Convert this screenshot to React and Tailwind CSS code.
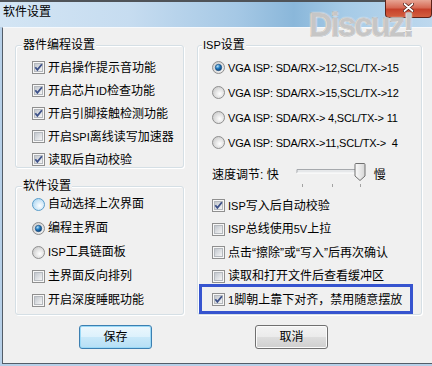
import React, { useId } from "react";

function uid() {
  return useId().replace(/[^a-zA-Z0-9]/g, "");
}

function CheckBox({ checked }) {
  const id = uid();
  return (
    <svg width="13" height="13" viewBox="0 0 13 13" className="shrink-0">
      <defs>
        <linearGradient id={`cb${id}`} x1="0" y1="0" x2="1" y2="1">
          <stop offset="0" stopColor="#bfc4cb" />
          <stop offset="1" stopColor="#f8f8f8" />
        </linearGradient>
      </defs>
      <rect x="0.5" y="0.5" width="12" height="12" fill="#f7f7f7" stroke="#8f8f8f" />
      <rect x="2.5" y="2.5" width="8" height="8" fill={`url(#cb${id})`} stroke="#b5b9be" />
      {checked && (
        <path d="M3.3 6.3 L5.4 8.9 L9.9 3.3" fill="none" stroke="#3d5189" strokeWidth="1.8" />
      )}
    </svg>
  );
}

function Radio({ checked, hover }) {
  const id = uid();
  return (
    <svg width="13" height="13" viewBox="0 0 13 13" className="shrink-0">
      <defs>
        <radialGradient id={`rb${id}`} cx="0.6" cy="0.6" r="0.6">
          <stop offset="0" stopColor="#ffffff" />
          <stop offset="1" stopColor={hover ? "#b3d9f2" : "#cfcfcf"} />
        </radialGradient>
        <radialGradient id={`rd${id}`} cx="0.35" cy="0.3" r="0.75">
          <stop offset="0" stopColor="#b5e4fb" />
          <stop offset="0.5" stopColor="#1f78be" />
          <stop offset="1" stopColor="#0b3d72" />
        </radialGradient>
      </defs>
      <circle cx="6.5" cy="6.5" r="6" fill={`url(#rb${id})`} stroke={hover ? "#5b9dc9" : "#8f8f8f"} />
      {checked && <circle cx="6.5" cy="6.5" r="3.2" fill={`url(#rd${id})`} stroke="#1b4c7c" strokeWidth="0.7" />}
    </svg>
  );
}

function L({ children }) {
  return <span className="text-[11px]">{children}</span>;
}

function Row({ h, control, children, mono }) {
  return (
    <div className={`flex items-center ${h}`}>
      {control}
      <span className={`ml-[3px] whitespace-pre leading-[14px] ${mono ? "text-[11px] tracking-[-0.2px]" : ""}`}>
        {children}
      </span>
    </div>
  );
}

function Group({ label, labelLeft, className, children }) {
  return (
    <div
      className={`relative rounded-[3px] border border-[#d5dfe5] shadow-[inset_1px_1px_0_#ffffff,1px_1px_0_#ffffff] ${className}`}
    >
      <span className={`absolute top-[-8px] ${labelLeft} bg-[#f0f0f0] px-[1px] leading-[14px]`}>{label}</span>
      {children}
    </div>
  );
}

function Slider() {
  return (
    <svg width="72" height="27" viewBox="0 0 72 27" className="shrink-0">
      <defs>
        <linearGradient id="thumbg" x1="0" y1="0" x2="1" y2="0">
          <stop offset="0" stopColor="#fbfbfb" />
          <stop offset="1" stopColor="#d6d6d6" />
        </linearGradient>
      </defs>
      <rect x="2" y="7.5" width="67" height="3.5" fill="#e6e8ea" />
      <line x1="2" y1="7.5" x2="69" y2="7.5" stroke="#a6a9ad" />
      <line x1="2" y1="7.5" x2="2" y2="11" stroke="#a6a9ad" />
      <line x1="2" y1="11" x2="69" y2="11" stroke="#ffffff" />
      <line x1="7.5" y1="22" x2="7.5" y2="25" stroke="#a2a2a2" />
      <line x1="37.5" y1="22" x2="37.5" y2="25" stroke="#a2a2a2" />
      <line x1="65.5" y1="22" x2="65.5" y2="25" stroke="#a2a2a2" />
      <path
        d="M60 2.5 Q60 1.5 61 1.5 L69 1.5 Q70 1.5 70 2.5 L70 14 L65 18.5 L60 14 Z"
        fill="url(#thumbg)"
        stroke="#707070"
      />
    </svg>
  );
}

export default function App() {
  return (
    <div className="relative w-[432px] h-[366px] overflow-hidden bg-[#f0f0f0] text-[12px] text-black font-['Liberation_Sans','Noto_Sans_CJK_SC',sans-serif]">
      {/* Title bar */}
      <div className="h-[27px] bg-[linear-gradient(90deg,#d3e5f4_0%,#c6dcf0_30%,#a5c8e5_55%,#8ab7da_68%,#a6cbe7_80%,#bdd8ee_100%)]">
        <div className="h-[2px] bg-[#4f5358]" />
        <div className="pl-[3px] pt-[3px] text-[12px] leading-[14px]">软件设置</div>
      </div>

      {/* Close button */}
      <div className="absolute left-[385px] top-0 w-[47px] h-[18px] rounded-b-[4px] border border-t-0 border-[#5d2219] bg-[linear-gradient(to_bottom,#e7a594_0%,#d66a55_45%,#c6412b_55%,#d35f3f_100%)] flex items-start justify-center pt-[3px]">
        <svg width="11" height="9" viewBox="0 0 11 9">
          <path d="M1.5 1 L9.5 8 M9.5 1 L1.5 8" stroke="#4a150d" strokeWidth="3.2" strokeLinecap="round" />
          <path d="M1.5 1 L9.5 8 M9.5 1 L1.5 8" stroke="#ffffff" strokeWidth="1.8" strokeLinecap="round" />
        </svg>
      </div>

      {/* Watermark */}
      <div className="absolute left-[309px] top-[12px] text-[33px] font-bold tracking-[-2px] text-[#c6c6c6] leading-[26px] font-['Liberation_Sans',sans-serif] [-webkit-text-stroke:1.2px_#8f8f8f] [paint-order:stroke_fill] [text-shadow:0_0_2px_#ffffff,0_0_2px_#ffffff]">
        Discuz!
      </div>

      {/* Frame + client */}
      <div className="flex flex-col h-[339px] bg-[#b7d0e8] pl-[2px] pb-[2px]">
        <div className="flex-1 border-l border-b border-[#535d68] border-t border-t-[#f6f9fc] bg-[#f0f0f0] pl-[12px] pt-[17px]">
          <div className="flex gap-[13px]">
            {/* Left column */}
            <div className="w-[169px] flex flex-col">
              <Group label="器件编程设置" labelLeft="left-[6px]" className="h-[123px] pl-[16px] pt-[10px]">
                <Row h="h-[23px]" control={<CheckBox checked />}>开启操作提示音功能</Row>
                <Row h="h-[23px]" control={<CheckBox checked />}>
                  开启芯片<L>ID</L>检查功能
                </Row>
                <Row h="h-[23px]" control={<CheckBox checked />}>开启引脚接触检测功能</Row>
                <Row h="h-[23px]" control={<CheckBox />}>
                  开启<L>SPI</L>离线读写加速器
                </Row>
                <Row h="h-[23px]" control={<CheckBox checked />}>读取后自动校验</Row>
              </Group>
              <Group label="软件设置" labelLeft="left-[6px]" className="mt-[18px] h-[129px] pl-[16px] pt-[5px]">
                <Row h="h-[24px]" control={<Radio hover />}>自动选择上次界面</Row>
                <Row h="h-[24px]" control={<Radio checked />}>编程主界面</Row>
                <Row h="h-[24px]" control={<Radio />}>
                  <L>ISP</L>工具链面板
                </Row>
                <Row h="h-[24px]" control={<CheckBox />}>主界面反向排列</Row>
                <Row h="h-[24px]" control={<CheckBox />}>开启深度睡眠功能</Row>
              </Group>
            </div>

            {/* Right column */}
            <div className="w-[225px]">
              <Group
                label={
                  <>
                    <L>ISP</L>设置
                  </>
                }
                labelLeft="left-[4px]"
                className="h-[270px] pl-[14px] pt-[9px]"
              >
                <Row h="h-[25px]" mono control={<Radio checked />}>VGA ISP: SDA/RX-&gt;12,SCL/TX-&gt;15</Row>
                <Row h="h-[25px]" mono control={<Radio />}>VGA ISP: SDA/RX-&gt;15,SCL/TX-&gt;12</Row>
                <Row h="h-[25px]" mono control={<Radio />}>VGA ISP: SDA/RX-&gt; 4,SCL/TX-&gt; 11</Row>
                <Row h="h-[25px]" mono control={<Radio />}>VGA ISP: SDA/RX-&gt;11,SCL/TX-&gt;  4</Row>

                <div className="flex items-start h-[39px]">
                  <span className="mt-[13px] leading-[14px] whitespace-pre">速度调节: 快</span>
                  <div className="ml-[16px] mt-[7px]">
                    <Slider />
                  </div>
                  <span className="mt-[13px] ml-[7px] leading-[14px]">慢</span>
                </div>

                <Row h="h-[23.5px]" control={<CheckBox checked />}>
                  <L>ISP</L>写入后自动校验
                </Row>
                <Row h="h-[23.5px]" control={<CheckBox />}>
                  <L>ISP</L>总线使用<L>5V</L>上拉
                </Row>
                <Row h="h-[23.5px]" control={<CheckBox />}>点击“擦除”或“写入”后再次确认</Row>
                <Row h="h-[23.5px]" control={<CheckBox />}>读取和打开文件后查看缓冲区</Row>
                <Row h="h-[23.5px]" control={<CheckBox checked />}>
                  <L>1</L>脚朝上靠下对齐，禁用随意摆放
                </Row>

                <div className="absolute left-[1px] top-[238px] w-[214px] h-[30px] border-[3px] border-[#3654cf]" />
              </Group>
            </div>
          </div>

          {/* Buttons */}
          <div className="flex mt-[10px] ml-[64px] gap-[103px]">
            <button className="w-[73px] h-[24px] rounded-[3px] border border-[#3c7fb1] bg-[linear-gradient(to_bottom,#ecf7fd_0%,#ddf1fc_48%,#c8e8f9_52%,#b6dff5_100%)] shadow-[inset_0_0_0_1px_#9ad9f7] text-[12px] leading-[14px]">
              保存
            </button>
            <button className="w-[73px] h-[24px] rounded-[3px] border border-[#707070] bg-[linear-gradient(to_bottom,#f3f3f3_0%,#ebebeb_48%,#dddddd_52%,#cfcfcf_100%)] shadow-[inset_0_0_0_1px_#fbfbfb] text-[12px] leading-[14px]">
              取消
            </button>
          </div>
        </div>
      </div>
    </div>
  );
}
